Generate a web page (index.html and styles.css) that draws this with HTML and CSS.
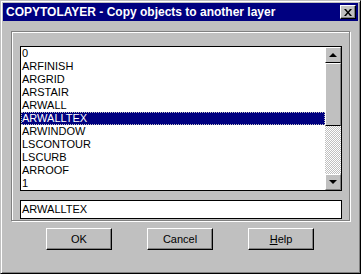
FILE: index.html
```html
<!DOCTYPE HTML>
<html>
<head>
  <meta charset="UTF-8">
  <title>COPYTOLAYER</title>
  <link rel="stylesheet" href="styles.css">
</head>
<body>
  <div class="window">
    <div class="titlebar">
      <span class="title">COPYTOLAYER - Copy objects to another layer</span>
      <span class="close-btn">
        <svg width="8" height="7" viewBox="0 0 8 7">
          <path d="M0 0h2l2 2.5L6 0h2L5 3.5 8 7H6L4 4.5 2 7H0l3-3.5z" fill="#000"/>
        </svg>
      </span>
    </div>

    <div class="group">
      <div class="listbox">
        <ul class="items">
          <li>0</li>
          <li>ARFINISH</li>
          <li>ARGRID</li>
          <li>ARSTAIR</li>
          <li>ARWALL</li>
          <li class="selected">ARWALLTEX</li>
          <li>ARWINDOW</li>
          <li>LSCONTOUR</li>
          <li>LSCURB</li>
          <li>ARROOF</li>
          <li>1</li>
        </ul>
        <div class="scrollbar">
          <div class="sb-btn"><span class="arrow-up"></span></div>
          <div class="sb-thumb"></div>
          <div class="sb-track"></div>
          <div class="sb-btn"><span class="arrow-down"></span></div>
        </div>
      </div>
      <div class="editbox">ARWALLTEX</div>
    </div>

    <div class="buttons">
      <button class="btn">OK</button>
      <button class="btn">Cancel</button>
      <button class="btn"><u>H</u>elp</button>
    </div>
  </div>
</body>
</html>
```

FILE: styles.css
```css
body {
  margin: 0;
  font-family: "Liberation Sans", Arial, sans-serif;
  font-size: 11px;
  color: #000;
  background: #c0c0c0;
}

.window {
  width: 361px;
  height: 274px;
  box-sizing: border-box;
  background: #c0c0c0;
  border: 1px solid;
  border-color: #c0c0c0 #000 #000 #c0c0c0;
  box-shadow: inset 1px 1px #fff, inset -1px -1px #808080;
  padding: 2px;
}

.titlebar {
  height: 18px;
  background: #000080;
  color: #fff;
  display: flex;
  align-items: center;
  justify-content: space-between;
  padding: 0 2px 0 3px;
}

.title {
  font-weight: bold;
  font-size: 12px;
}

.close-btn {
  width: 14px;
  height: 12px;
  background: #c0c0c0;
  border: 1px solid;
  border-color: #fff #000 #000 #fff;
  box-shadow: inset -1px -1px #808080;
  display: flex;
  align-items: center;
  justify-content: center;
}

.group {
  margin: 10px 0 0 8px;
  width: 339px;
  height: 190px;
  box-sizing: border-box;
  border: 1px solid #808080;
  box-shadow: inset 1px 1px #fff, 1px 1px #fff;
  padding: 14px 0 0 8px;
}

.listbox {
  width: 322px;
  height: 145px;
  box-sizing: border-box;
  border: 1px solid #000;
  background: #fff;
  display: flex;
}

.items {
  list-style: none;
  margin: 0;
  padding: 0;
  flex: 1;
}

.items li {
  height: 13px;
  line-height: 13px;
  padding-left: 1px;
}

.items li.selected {
  background: #000080;
  color: #fff;
  outline: 1px dotted #c0c0c0;
  outline-offset: -1px;
}

.scrollbar {
  width: 16px;
  display: flex;
  flex-direction: column;
}

.sb-btn {
  height: 14px;
  background: #c0c0c0;
  border: 1px solid;
  border-color: #fff #808080 #808080 #fff;
  display: flex;
  align-items: center;
  justify-content: center;
}

.sb-btn:first-child {
  border-bottom: 1px solid #000;
}

.sb-thumb {
  height: 61px;
  background: #c0c0c0;
  border: 1px solid;
  border-color: #fff #808080 #000 #fff;
}

.sb-track {
  flex: 1;
  background: repeating-conic-gradient(#fff 0 25%, #c0c0c0 0 50%) 0 0 / 2px 2px;
}

.arrow-up {
  width: 0;
  height: 0;
  border-left: 4px solid transparent;
  border-right: 4px solid transparent;
  border-bottom: 4px solid #000;
}

.arrow-down {
  width: 0;
  height: 0;
  border-left: 4px solid transparent;
  border-right: 4px solid transparent;
  border-top: 4px solid #000;
}

.editbox {
  margin-top: 9px;
  width: 322px;
  height: 19px;
  box-sizing: border-box;
  border: 1px solid #000;
  background: #fff;
  line-height: 17px;
  padding-left: 1px;
}

.buttons {
  margin-top: 7px;
  display: flex;
  justify-content: center;
  gap: 35px;
  padding-right: 1px;
}

.btn {
  width: 66px;
  height: 22px;
  padding: 0;
  background: #c0c0c0;
  border: 1px solid;
  border-color: #fff #000 #000 #fff;
  box-shadow: inset -1px -1px #808080;
  font-family: "Liberation Sans", Arial, sans-serif;
  font-size: 11px;
  color: #000;
}
```
